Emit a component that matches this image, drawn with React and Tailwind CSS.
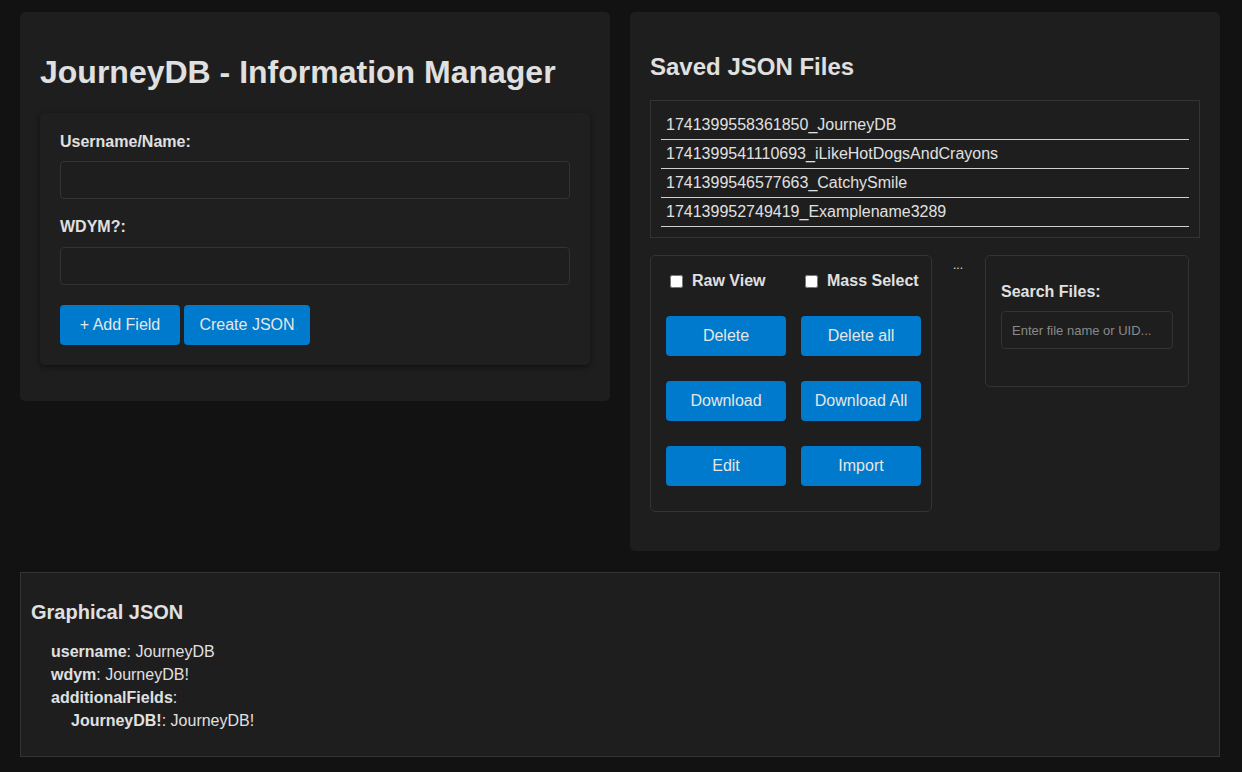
import React from "react";

const files = [
  "1741399558361850_JourneyDB",
  "1741399541110693_iLikeHotDogsAndCrayons",
  "1741399546577663_CatchySmile",
  "174139952749419_Examplename3289",
];

const actions = ["Delete", "Delete all", "Download", "Download All", "Edit", "Import"];

function BlueButton({ children, className = "" }) {
  return (
    <button
      type="button"
      className={`h-[40px] rounded-[4px] bg-[#007acc] text-[16px] text-[#e6e6e6] ${className}`}
    >
      {children}
    </button>
  );
}

function FormField({ label, className = "", gap = "mb-[10px]" }) {
  return (
    <div className={className}>
      <label className={`${gap} block text-[16px] font-bold leading-[18px]`}>{label}</label>
      <input
        type="text"
        className="block h-[38px] w-full rounded-[4px] border border-[#333] bg-[#1e1e1e] px-[10px] text-[16px] text-[#e0e0e0] outline-none"
      />
    </div>
  );
}

function Entry({ name, value, nested = false }) {
  return (
    <div className={`text-[16px] leading-[23px] ${nested ? "pl-[40px]" : "pl-[20px]"}`}>
      <span className="font-bold">{name}</span>
      {value !== undefined ? `: ${value}` : ":"}
    </div>
  );
}

export default function App() {
  return (
    <div className="min-h-screen bg-[#121212] px-[20px] pt-[12px] pb-[16px] font-['Liberation_Sans',Arial,sans-serif] text-[#e0e0e0]">
      <div className="flex items-start gap-[20px]">
        {/* editor */}
        <section className="w-[590px] rounded-[5px] bg-[#1e1e1e] p-[20px]">
          <h1 className="mt-[22px] mb-[22px] text-[32px] font-bold leading-[37px]">
            JourneyDB - Information Manager
          </h1>
          <div className="mb-[16px] rounded-[5px] bg-[#1f1f1f] p-[20px] shadow-[0_2px_6px_rgba(0,0,0,0.45)]">
            <FormField label="Username/Name:" className="mb-[19px]" />
            <FormField label="WDYM?:" className="mb-[20px]" gap="mb-[11px]" />
            <div className="flex gap-[4px]">
              <BlueButton className="w-[120px]">+ Add Field</BlueButton>
              <BlueButton className="w-[126px]">Create JSON</BlueButton>
            </div>
          </div>
        </section>

        {/* saved files */}
        <section className="w-[590px] rounded-[5px] bg-[#1e1e1e] px-[20px] pt-[20px] pb-[39px]">
          <h2 className="mt-[21px] mb-[19px] text-[24px] font-bold leading-[28px]">Saved JSON Files</h2>
          <ul className="border border-[#333] p-[10px]">
            {files.map((f) => (
              <li key={f} className="border-b border-[#d0d0d0] px-[5px] py-[5px] text-[16px] leading-[18px]">
                {f}
              </li>
            ))}
          </ul>

          <div className="mt-[17px] flex items-start">
            <div className="w-[282px] rounded-[5px] border border-[#333] pt-[16px] pr-[10px] pb-[25px] pl-[15px]">
              <div className="mb-[26px] grid grid-cols-[120px_120px] gap-x-[15px]">
                <label className="flex items-center text-[16px] font-bold leading-[18px]">
                  <input type="checkbox" className="ml-[4px] mr-[9px] h-[13px] w-[13px]" />
                  Raw View
                </label>
                <label className="flex items-center whitespace-nowrap text-[16px] font-bold leading-[18px]">
                  <input type="checkbox" className="ml-[4px] mr-[9px] h-[13px] w-[13px]" />
                  Mass Select
                </label>
              </div>
              <div className="grid grid-cols-[120px_120px] gap-x-[15px] gap-y-[25px]">
                {actions.map((a) => (
                  <BlueButton key={a}>{a}</BlueButton>
                ))}
              </div>
            </div>

            <span className="ml-[21px] pt-[3px] text-[12px] leading-[14px]">...</span>

            <div className="ml-[22px] w-[204px] rounded-[5px] border border-[#333] px-[15px] pt-[27px] pb-[37px]">
              <label className="mb-[10px] block text-[16px] font-bold leading-[18px]">Search Files:</label>
              <input
                type="text"
                placeholder="Enter file name or UID..."
                className="block h-[38px] w-full rounded-[4px] border border-[#333] bg-[#1e1e1e] px-[10px] text-[13px] text-[#e0e0e0] outline-none placeholder:text-[#8a8a8a]"
              />
            </div>
          </div>
        </section>
      </div>

      {/* graphical json */}
      <section className="mt-[21px] w-[1200px] border border-[#333] bg-[#1e1e1e] px-[10px] pt-[10px] pb-[24px]">
        <h3 className="mt-[18px] mb-[16px] text-[20px] font-bold leading-[23px]">Graphical JSON</h3>
        <Entry name="username" value="JourneyDB" />
        <Entry name="wdym" value="JourneyDB!" />
        <Entry name="additionalFields" />
        <Entry name="JourneyDB!" value="JourneyDB!" nested />
      </section>
    </div>
  );
}
